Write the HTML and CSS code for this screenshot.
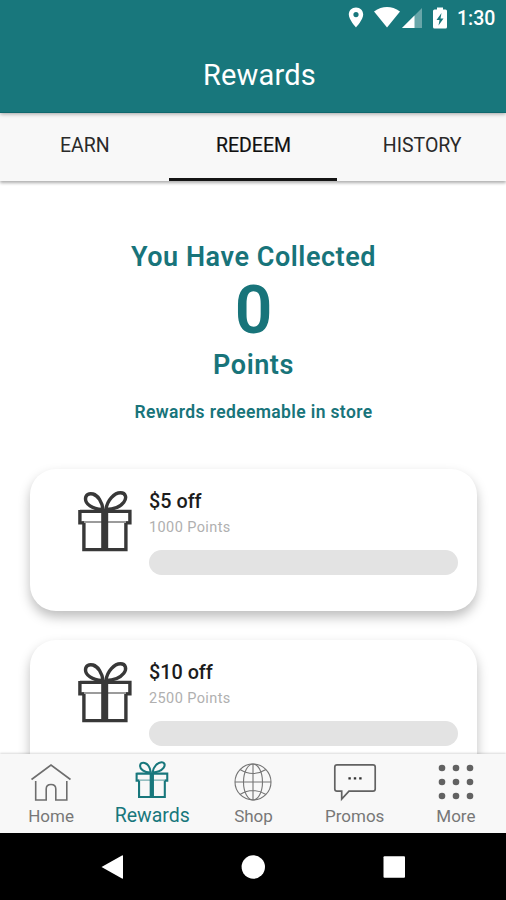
FILE: index.html
```html
<!DOCTYPE html>
<html lang="en">
<head>
<meta charset="utf-8">
<title>Rewards</title>
<link rel="stylesheet" href="styles.css">
</head>
<body>
<svg class="defs" width="0" height="0" aria-hidden="true">
  <symbol id="gift" viewBox="0 0 54 62">
    <g fill="none" stroke="currentColor" stroke-width="3.4">
      <path d="M24 19.5C14 19 7.5 14 7.5 9C7.5 4.500 11 3 15 4C20 5.500 24 11.500 25 19.500"/>
      <path d="M28 19.500C29 10 36.500 2.800 42.500 2.800C48 2.800 49 8 45.800 12.200C42 17 35 19.300 28 19.500"/>
      <path d="M1.900 21.400H51.900V32.900H48M1.900 20V32.900H6"/>
      <path d="M5.900 33V59.600H47.900V33"/>
      <path d="M4 32H50" stroke-width="1.200"/>
    </g>
    <path d="M23.200 19H30.200V60H23.200Z" fill="currentColor"/>
  </symbol>
</svg>
<div class="screen">
  <header class="header">
    <div class="status">
      <svg class="pin" width="16" height="21" viewBox="0 0 16 21"><path fill="#fff" fill-rule="evenodd" d="M8 0.500C3.800 0.500 .8 3.600 .8 7.600C.8 12.800 8 20.500 8 20.500S15.200 12.800 15.200 7.600C15.200 3.600 12.200 .5 8 .5ZM8 5A2.600 2.600 0 1 1 8 10.200A2.600 2.600 0 0 1 8 5Z"/></svg>
      <svg class="wifi" width="26" height="21" viewBox="0 0 26 21"><path fill="#fff" d="M0 4.500Q13-4.300 26 4.500L13 20.500Z"/></svg>
      <svg class="signal" width="20" height="20" viewBox="0 0 20 20"><path fill="#fff" opacity=".35" d="M20 0V20H0Z"/><path fill="#fff" d="M12.500 7.500V20H0Z"/></svg>
      <svg class="battery" width="14" height="22" viewBox="0 0 14 22"><path fill="#fff" fill-rule="evenodd" d="M4 .5H10V2.500H12.500Q14 2.500 14 4V20Q14 21.500 12.500 21.500H1.500Q0 21.500 0 20V4Q0 2.500 1.500 2.500H4ZM8.500 6L3.500 13H6.500L5.500 18.500L10.500 11.500H7.500Z"/></svg>
      <span class="time">1:30</span>
    </div>
    <h1 class="title">Rewards</h1>
  </header>
  <nav class="tabs">
    <span class="tab">EARN</span>
    <span class="tab active">REDEEM</span>
    <span class="tab">HISTORY</span>
  </nav>
  <main class="content">
    <section class="summary">
      <p class="lead">You Have Collected</p>
      <p class="count">0</p>
      <p class="unit">Points</p>
      <p class="note">Rewards redeemable in store</p>
    </section>
    <article class="card">
      <svg class="card-icon" width="54" height="62"><use href="#gift"/></svg>
      <div class="card-body">
        <h2 class="offer">$5 off</h2>
        <p class="cost">1000 Points</p>
        <div class="progress"></div>
      </div>
    </article>
    <article class="card">
      <svg class="card-icon" width="54" height="62"><use href="#gift"/></svg>
      <div class="card-body">
        <h2 class="offer">$10 off</h2>
        <p class="cost">2500 Points</p>
        <div class="progress"></div>
      </div>
    </article>
  </main>
  <nav class="bottom">
    <div class="item">
      <svg width="42" height="40" viewBox="0 0 42 40" fill="none" stroke="#6e6e6e" stroke-width="1.600"><path d="M1.500 17.500L21 3L40.500 17.500M5.700 19V38H16.200V27Q16.200 22.500 21 22.500Q25.800 22.500 25.800 27V38H36.800V19"/></svg>
      <span class="label">Home</span>
    </div>
    <div class="item selected">
      <svg class="gift-small" width="34" height="40" viewBox="0 0 34 40"><use href="#gift" x="0" y="-1.500" width="34" height="38"/></svg>
      <span class="label">Rewards</span>
    </div>
    <div class="item">
      <svg width="40" height="40" viewBox="0 0 40 40" fill="none" stroke="#747474" stroke-width="1.100"><circle cx="20" cy="20" r="18"/><ellipse cx="20" cy="20" rx="9.500" ry="18"/><path d="M20 2V38M2 20H38M7 7.500Q20 15.500 33 7.500M7 32.500Q20 24.500 33 32.500"/></svg>
      <span class="label">Shop</span>
    </div>
    <div class="item">
      <svg width="44" height="40" viewBox="0 0 44 40" fill="none" stroke="#626262" stroke-width="1.700"><path d="M4 2.800H40Q42.200 2.800 42.200 5V27Q42.200 29.200 40 29.200H16L8.700 37V29.200H4Q1.800 29.200 1.800 27V5Q1.800 2.800 4 2.800Z"/><path d="M15.400 16.400H17.800M20.800 16.400H23.200M26.200 16.400H28.600" stroke="#333" stroke-width="2.300"/></svg>
      <span class="label">Promos</span>
    </div>
    <div class="item">
      <svg width="40" height="40" viewBox="0 0 40 40" fill="#626262"><circle cx="6" cy="6" r="3.300"/><circle cx="20" cy="6" r="3.300"/><circle cx="34" cy="6" r="3.300"/><circle cx="6" cy="20" r="3.300"/><circle cx="20" cy="20" r="3.300"/><circle cx="34" cy="20" r="3.300"/><circle cx="6" cy="34" r="3.300"/><circle cx="20" cy="34" r="3.300"/><circle cx="34" cy="34" r="3.300"/></svg>
      <span class="label">More</span>
    </div>
  </nav>
  <footer class="system">
    <svg width="24" height="26" viewBox="0 0 24 26"><path fill="#fff" d="M1.500 13L22 1.500Q23 1 23 2V24Q23 25 22 24.500Z"/></svg>
    <svg width="24" height="26" viewBox="0 0 24 26"><circle cx="12.300" cy="13" r="11.700" fill="#fff"/></svg>
    <svg width="24" height="26" viewBox="0 0 24 26"><rect x="1.500" y="2.300" width="21.500" height="21.500" rx="1" fill="#fff"/></svg>
  </footer>
</div>
</body>
</html>
```
FILE: styles.css
```css
* { box-sizing: border-box; margin: 0; padding: 0; }
body { font-family: Roboto, "Liberation Sans", sans-serif; background: #fff; }
.defs { position: absolute; }
svg { display: block; flex: none; }
.screen { width: 506px; height: 900px; display: flex; flex-direction: column; overflow: hidden; }

.header { position: relative; z-index: 2; flex: none; height: 113px; background: #18777c; color: #fff; border-bottom: 1px solid #0f686e; box-shadow: 0 1px 4px rgba(0,0,0,.35); }
.status { height: 35px; display: flex; align-items: center; justify-content: flex-end; padding-right: 11px; }
.wifi { margin-left: 10px; }
.signal { margin-left: 2px; }
.battery { margin-left: 11px; }
.time { margin-left: 10px; width: 38px; font-size: 19.500px; font-weight: 500; line-height: 37px; padding-top: 1px; white-space: nowrap; }
.title { font-size: 29px; font-weight: 400; letter-spacing: .2px; line-height: 40px; padding-top: 20px; text-align: center; padding-left: 13px; }

.tabs { position: relative; z-index: 1; flex: none; height: 68px; display: grid; grid-template-columns: repeat(3, 1fr); background: #f8f8f8; box-shadow: 0 2px 3px rgba(0,0,0,.32); }
.tab { padding: 18px 0 0 1px; text-align: center; font-size: 19.500px; line-height: 30px; color: #2a2a2a; }
.tab.active { border-bottom: 3px solid #151515; color: #111; -webkit-text-stroke: .2px #111; }

.content { flex: 1; min-height: 0; overflow: hidden; padding: 58px 29px 0 30px; display: flex; flex-direction: column; }
.summary { flex: none; height: 230px; text-align: center; color: #18747a; font-weight: 600; }
.lead, .unit { font-size: 27px; line-height: 36px; letter-spacing: .55px; }
.count { font-size: 66px; line-height: 72px; font-weight: 600; }
.note { font-size: 17.500px; line-height: 24px; margin-top: 17px; letter-spacing: .37px; }

.card { flex: none; height: 142px; margin-bottom: 29px; border-radius: 26px; background: #fff; box-shadow: 0 6px 12px rgba(0,0,0,.26); display: flex; padding: 21px 19px 0 48px; }
.card-icon { color: #383838; }
.card-body { flex: 1; margin-left: 17px; }
.offer { font-size: 19.800px; line-height: 24px; font-weight: 500; color: #1c1c1c; }
.cost { font-size: 14.500px; line-height: 20px; margin-top: 4px; letter-spacing: .4px; color: #b0b0b0; }
.progress { height: 25px; margin-top: 12px; border-radius: 13px; background: #e3e3e3; }

.bottom { position: relative; flex: none; height: 79px; display: grid; grid-template-columns: repeat(5, 1fr); background: #f8f8f8; box-shadow: 0 -1px 2px rgba(0,0,0,.15); }
.item { display: flex; flex-direction: column; align-items: center; padding: 8px 0 0 1px; color: #777; }
.label { font-size: 17px; line-height: 24px; margin-top: 2px; }
.gift-small { overflow: visible; }
.selected { color: #18777c; }
.selected .label { font-size: 19.500px; margin-top: 2px; }

.system { flex: none; height: 67px; background: #000; display: flex; justify-content: center; align-items: center; gap: 117px; }
```
